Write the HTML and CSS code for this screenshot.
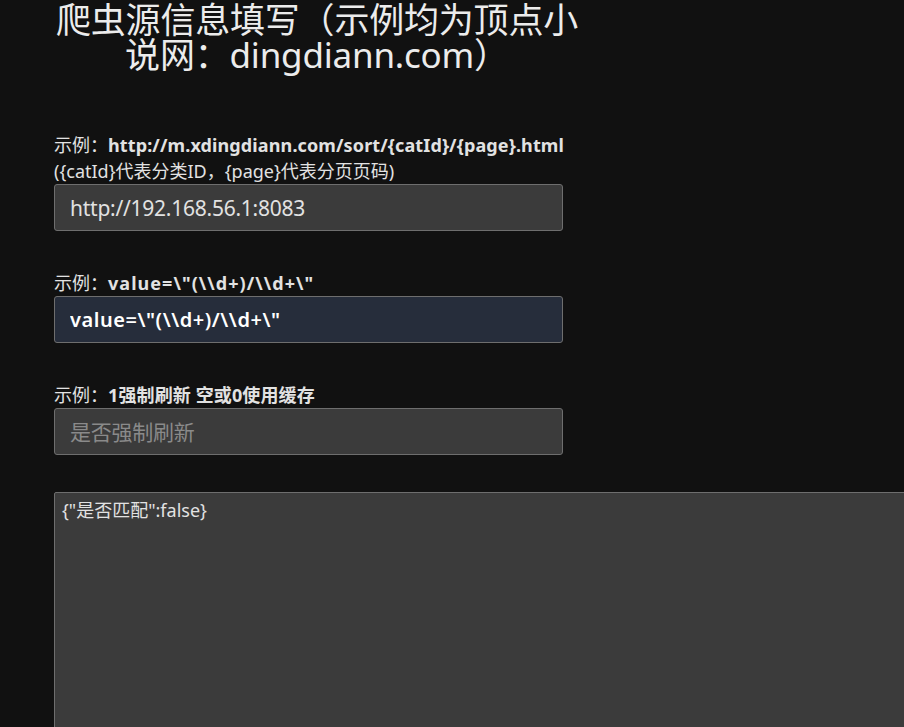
FILE: index.html
```html
<!DOCTYPE html>
<html lang="zh">
<head>
<meta charset="utf-8">
<title>爬虫源信息填写</title>
<link rel="stylesheet" href="styles.css">
</head>
<body>
<div class="page">
  <h1 class="title">爬虫源信息填写（示例均为顶点小说网：dingdiann.com）</h1>
  <div class="group">
    <div class="label">示例：<b>http://m.xdingdiann.com/sort/{catId}/{page}.html</b></div>
    <div class="label">({catId}代表分类ID，{page}代表分页页码)</div>
    <input class="field" type="text" value="http://192.168.56.1:8083">
  </div>
  <div class="group">
    <div class="label">示例：<b class="wide">value=\"(\\d+)/\\d+\"</b></div>
    <input class="field filled" type="text" value='value=\"(\\d+)/\\d+\"'>
  </div>
  <div class="group last">
    <div class="label">示例：<b>1强制刷新 空或0使用缓存</b></div>
    <input class="field" type="text" placeholder="是否强制刷新">
  </div>
  <textarea class="result">{"是否匹配":false}</textarea>
</div>
</body>
</html>
```
FILE: styles.css
```css
html, body {
  margin: 0;
  padding: 0;
  background: #111111;
  overflow: hidden;
  height: 100%;
}
body {
  font-family: "Noto Sans", "Noto Sans CJK SC", sans-serif;
  color: #e0e0e0;
}
.page {
  padding-left: 54px;
  width: 900px;
}
.title {
  width: 540px;
  margin: 0 0 0 -7px;
  padding-top: 2px;
  font-size: 35px;
  font-weight: 400;
  line-height: 35px;
  text-align: center;
  color: #ececec;
  font-family: "Noto Sans", "Noto Sans CJK SC", sans-serif;
  letter-spacing: -0.2px;
}
.group {
  margin-top: 0;
  margin-bottom: 39px;
  width: 509px;
}
.group:first-of-type {
  margin-top: 60px;
}
.group.last {
  margin-bottom: 37px;
}
.label {
  font-size: 18px;
  line-height: 26px;
  color: #e2e2e2;
  white-space: nowrap;
}
.label b {
  font-weight: 700;
  letter-spacing: 0.12px;
}
.label b.wide {
  letter-spacing: 1.05px;
}
.field {
  display: block;
  box-sizing: border-box;
  width: 509px;
  height: 47px;
  margin: 0;
  padding: 0 15px;
  background: #3b3b3b;
  border: 1px solid #6e6e6e;
  border-radius: 3px;
  color: #e2e2e2;
  font-family: "Noto Sans", "Noto Sans CJK SC", sans-serif;
  font-size: 21px;
  letter-spacing: -0.25px;
  outline: none;
}
.field::placeholder {
  color: #8a8a8a;
}
.field.filled {
  background: #262d3b;
  color: #ffffff;
  font-weight: 600;
  font-size: 20px;
  letter-spacing: 0.55px;
}
.result {
  display: block;
  box-sizing: border-box;
  width: 900px;
  height: 300px;
  margin: 0;
  padding: 5px 7px;
  background: #3b3b3b;
  border: 1px solid #6e6e6e;
  border-radius: 2px;
  color: #e2e2e2;
  font-family: "Noto Sans", "Noto Sans CJK SC", sans-serif;
  font-size: 18px;
  line-height: 24px;
  resize: none;
  outline: none;
}
```
